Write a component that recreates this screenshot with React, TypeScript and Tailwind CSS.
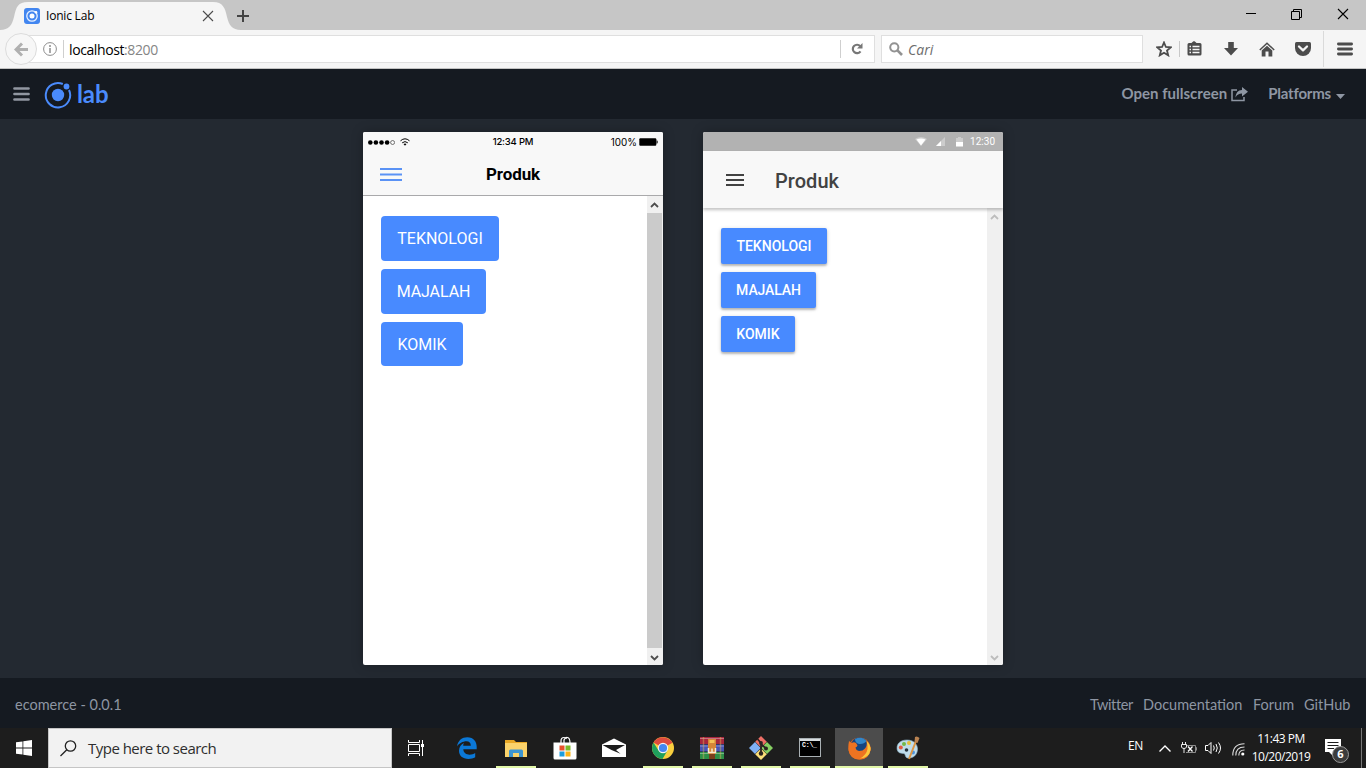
import React from "react";

type SvgProps = React.SVGProps<SVGSVGElement>;

const Svg = ({ children, ...p }: SvgProps) => (
  <svg fill="none" {...p} className={"block shrink-0 " + (p.className ?? "")}>
    {children}
  </svg>
);

/* ---------- Browser chrome ---------- */

function TabStrip() {
  return (
    <div className="relative flex h-[30px] shrink-0 bg-[#c6c6c6]">
      <Svg width="242" height="30" viewBox="0 0 242 30" className="absolute left-0 top-0">
        <path d="M0 30C9 30 12 25 14 17C16 7 18 2 28 2H213C223 2 225 8 227 17C229 25 232 30 241 30Z" fill="#f5f5f5" />
      </Svg>
      <div className="relative flex h-full w-full items-center">
        <Svg width="16" height="16" viewBox="0 0 16 16" className="ml-6 mt-0.5">
          <rect width="16" height="16" rx="3" fill="#4286f0" />
          <circle cx="8" cy="8" r="5.2" stroke="#e8f1ff" strokeWidth="1.3" />
          <circle cx="8" cy="8" r="2.5" fill="#fff" />
          <circle cx="12" cy="4.2" r="1.3" fill="#fff" />
        </Svg>
        <span className="ml-1.5 mt-0.5 w-[156px] text-[12px] leading-4 tracking-[-0.2px] text-black">Ionic Lab</span>
        <Svg width="12" height="12" viewBox="0 0 12 12" className="mt-0.5" stroke="#4b4b4b" strokeWidth="1.1">
          <path d="M1 1L11 11M11 1L1 11" />
        </Svg>
        <Svg width="12" height="12" viewBox="0 0 12 12" className="ml-[23px] mt-0.5" stroke="#444" strokeWidth="2">
          <path d="M6 0V12M0 6H12" />
        </Svg>
        <div className="ml-auto flex items-center gap-[35px] pr-[17px]">
          <Svg width="10" height="12" viewBox="0 0 10 12" stroke="#000" className="-mt-0.5">
            <path d="M0 5.5H10" />
          </Svg>
          <Svg width="11" height="11" viewBox="0 0 11 11" stroke="#000" className="-mt-0.5">
            <path d="M.5 2.5H8.500V10.500H.5ZM2.500 2.500V.5H10.500V8.500H8.500" />
          </Svg>
          <Svg width="12" height="12" viewBox="0 0 12 12" stroke="#000" strokeWidth="1.1" className="-mt-0.5">
            <path d="M1 1L11 11M11 1L1 11" />
          </Svg>
        </div>
      </div>
    </div>
  );
}

function Toolbar() {
  return (
    <div className="flex h-[39px] shrink-0 items-center border-b border-[#c2c2c2] bg-[#f5f5f5]">
      <div className="z-10 ml-[5px] flex size-8 items-center justify-center rounded-full border border-[#dcdcdc] bg-[#f7f7f7]">
        <Svg width="14" height="15" viewBox="0 0 14 15" stroke="#b0b0b0" strokeWidth="3">
          <path d="M8 1.500L2 7.500L8 13.500M2.500 7.500H14" />
        </Svg>
      </div>
      <div className="-ml-3 flex h-[28px] w-[850px] items-center border border-[#dfdfdf] bg-white">
        <Svg width="14" height="14" viewBox="0 0 14 14" className="ml-[17px]" stroke="#8d8d8d">
          <circle cx="7" cy="7" r="6.400" />
          <path d="M7 6V11M7 3V5" strokeWidth="1.500" />
        </Svg>
        <div className="ml-1.5 h-[18px] w-px bg-[#cfcfcf]" />
        <div className="ml-[5px] mt-px text-[14px] tracking-[-0.4px] text-black">
          localhost<span className="text-[#858585]">:8200</span>
        </div>
        <div className="ml-auto h-[18px] w-px bg-[#cfcfcf]" />
        <Svg width="12" height="12" viewBox="0 0 12 12" className="ml-[10px] mr-[11px]">
          <path d="M9.500 8.300A4.200 4.200 0 1 1 9.200 3.200" stroke="#777" strokeWidth="2.200" />
          <path d="M11.500 0V5.500H6Z" fill="#777" />
        </Svg>
      </div>
      <div className="ml-1.5 flex h-[28px] w-[262px] items-center border border-[#dfdfdf] bg-white">
        <Svg width="14" height="14" viewBox="0 0 14 14" className="ml-[7px]">
          <circle cx="5.300" cy="5.300" r="4.100" stroke="#929292" strokeWidth="2" />
          <path d="M8.400 8.400L13 13" stroke="#929292" strokeWidth="2.600" />
        </Svg>
        <span className="ml-[5px] mt-px text-[14px] italic text-[#6d6d6d]">Cari</span>
      </div>
      <Svg width="16" height="16" viewBox="0 0 16 16" className="ml-[13px]">
        <path d="M8 1.500L9.900 6L14.800 6.300L11 9.500L12.200 14.300L8 11.700L3.800 14.300L5 9.500L1.200 6.300L6.100 6Z" stroke="#4c4c4c" strokeWidth="1.800" />
      </Svg>
      <div className="ml-[7px] h-4 w-px bg-[#c8c8c8]" />
      <Svg width="15" height="15" viewBox="0 0 15 15" className="-mt-px ml-[7px]">
        <path d="M2 2H4.500L5.500 1L7 0L8.500 1L9.500 2H13Q14.500 2 14.500 3.500V13Q14.500 14.500 13 14.500H2Q.5 14.500 .5 13V3.500Q.5 2 2 2Z" fill="#4c4c4c" />
        <path d="M2.500 5.500H4M5.500 5.500H12.500M2.500 8.500H4M5.500 8.500H12.500M2.500 11.500H4M5.500 11.500H12.500" stroke="#f5f5f5" strokeWidth="1.400" />
      </Svg>
      <Svg width="14" height="14" viewBox="0 0 14 14" className="ml-[22px]">
        <path d="M4.200 0H9.800V6H14L7 13.500L0 6H4.200Z" fill="#4c4c4c" />
      </Svg>
      <Svg width="16" height="15" viewBox="0 0 16 15" className="ml-[21px]">
        <path d="M.8 8L8 1.300L15.200 8" stroke="#4c4c4c" strokeWidth="1.500" />
        <path d="M8 3.700L13.300 8.500V14.500H9.500V9.500H6.500V14.500H2.700V8.500Z" fill="#4c4c4c" />
      </Svg>
      <Svg width="16" height="14" viewBox="0 0 16 14" className="ml-5">
        <path d="M1.500 0H14.500Q16 0 16 1.500V6A8 8 0 0 1 0 6V1.500Q0 0 1.500 0Z" fill="#4c4c4c" />
        <path d="M4 4.500L8 8.300L12 4.500" stroke="#f5f5f5" strokeWidth="2.300" strokeLinecap="round" strokeLinejoin="round" />
      </Svg>
      <div className="ml-3 h-9 w-px bg-[#dadada]" />
      <Svg width="16" height="14" viewBox="0 0 16 14" className="ml-[13px]">
        <path d="M1.400 2H14.600M1.400 7H14.600M1.400 12H14.600" stroke="#4c4c4c" strokeWidth="2.800" strokeLinecap="round" />
      </Svg>
    </div>
  );
}

/* ---------- Ionic Lab ---------- */

function LabHeader() {
  return (
    <header className="flex h-[50px] shrink-0 items-center bg-[#151a21] font-['Lato',sans-serif] text-[#8e96a3]">
      <Svg width="17" height="14" viewBox="0 0 17 14" className="ml-[13px]">
        <path d="M1.500 1.500H15.500M1.500 7H15.500M1.500 12.500H15.500" stroke="#9197a1" strokeWidth="2.700" strokeLinecap="round" />
      </Svg>
      <Svg width="28" height="28" viewBox="0 0 28 28" className="ml-[14px] mt-px">
        <path d="M18.800 3A12.200 12.200 0 1 0 25 9" stroke="#4a8bfc" strokeWidth="2" />
        <circle cx="14" cy="14" r="6.200" fill="#4a8bfc" />
        <circle cx="22.500" cy="5.500" r="2.900" fill="#4a8bfc" />
      </Svg>
      <span className="ml-[5px] mb-px font-['Lato',sans-serif] text-[24px] font-bold leading-7 tracking-[-0.1px] text-[#4a8bfc]">lab</span>
      <span className="mb-px ml-auto text-[15px] font-bold">Open fullscreen</span>
      <Svg width="17" height="15" viewBox="0 0 17 15" className="ml-1">
        <path d="M6 3H1V13.500H13V10" stroke="#8e96a3" strokeWidth="1.500" />
        <path d="M11 0L17 4.800L11 9.500V6.500C8 6.500 6 7.500 4.500 10.500C4.800 6 7 3.300 11 3.100Z" fill="#8e96a3" />
      </Svg>
      <span className="mb-px ml-5 text-[15px] font-bold tracking-[-0.2px]">Platforms</span>
      <Svg width="9" height="5" viewBox="0 0 9 5" className="ml-[5px] mr-[21px] mt-1">
        <path d="M0 0H9L4.500 5Z" fill="#8e96a3" />
      </Svg>
    </header>
  );
}

function Scrollbar({ active }: { active: boolean }) {
  const c = active ? "#4d4d4d" : "#bdbdbd";
  return (
    <div className="flex w-4 shrink-0 flex-col items-center justify-between bg-[#f0f0f0] pr-px">
      <div className="flex h-[17px] items-center">
        <Svg width="9" height="6" viewBox="0 0 9 6" stroke={c} strokeWidth="1.800">
          <path d="M1 5L4.500 1.500L8 5" />
        </Svg>
      </div>
      {active && <div className="w-full flex-1 bg-[#cbcbcb]" />}
      <div className="flex h-[17px] items-center pt-0.5">
        <Svg width="9" height="6" viewBox="0 0 9 6" stroke={c} strokeWidth="1.800">
          <path d="M1 1L4.500 4.500L8 1" />
        </Svg>
      </div>
    </div>
  );
}

const categories = [
  { label: "TEKNOLOGI", ios: "w-[118px]", md: "w-[106px]" },
  { label: "MAJALAH", ios: "w-[105px] tracking-[-0.1px]", md: "w-[95px] tracking-[-0.1px]" },
  { label: "KOMIK", ios: "w-[82px]", md: "w-[74px]" },
];

function IosPhone() {
  return (
    <section className="flex h-[533px] w-[300px] flex-col overflow-hidden rounded-[2px] bg-white font-['Roboto',sans-serif] shadow-[0_0_12px_rgba(0,0,0,0.25)]">
      <div className="flex h-[64px] shrink-0 flex-col border-b border-[#a9a9ab] bg-[#f8f8f8]">
        <div className="grid h-5 grid-cols-3 items-center px-[5px] font-['Inter',sans-serif] text-[9.500px] text-black">
          <div className="flex items-center gap-[5px]">
            <Svg width="27" height="5" viewBox="0 0 27 5" fill="#000">
              <circle cx="2.300" cy="2.500" r="2.300" />
              <circle cx="7.900" cy="2.500" r="2.300" />
              <circle cx="13.500" cy="2.500" r="2.300" />
              <circle cx="19.100" cy="2.500" r="2.300" />
              <circle cx="24.600" cy="2.500" r="2" fill="none" stroke="#222" strokeWidth=".6" />
            </Svg>
            <Svg width="10" height="8" viewBox="0 0 10 8" stroke="#000">
              <path d="M.5 2.800Q5-1.200 9.500 2.800M2.200 4.800Q5 2.400 7.800 4.800" strokeWidth="1" />
              <path d="M3.500 6L5 7.700L6.500 6Q5 5 3.500 6Z" fill="#000" stroke="none" />
            </Svg>
          </div>
          <span className="text-center font-medium tracking-[-0.2px]">12:34 PM</span>
          <div className="flex items-center justify-end gap-[2px]">
            <span className="pt-px text-[9.900px]">100%</span>
            <Svg width="19" height="8" viewBox="0 0 19 8">
              <rect x=".3" y=".3" width="17" height="7.400" rx="1" fill="#000" />
              <path d="M17.900 2.500Q19 4 17.900 5.500Z" fill="#000" stroke="#000" strokeWidth=".5" />
            </Svg>
          </div>
        </div>
        <div className="grid flex-1 grid-cols-[1fr_auto_1fr] items-center pt-px">
          <Svg width="22" height="14" viewBox="0 0 22 14" className="ml-[17px]" stroke="#5a92f5" strokeWidth="2">
            <path d="M0 2H22M0 7.500H22M0 13H22" />
          </Svg>
          <span className="pt-0.5 text-[17px] font-bold tracking-[-0.1px] text-black">Produk</span>
        </div>
      </div>
      <div className="flex flex-1">
        <div className="flex flex-1 flex-col items-start gap-2 pl-[18px] pt-5 text-[16px] text-white">
          {categories.map((c) => (
            <button key={c.label} className={"h-[44.800px] whitespace-nowrap rounded bg-[#488aff] pt-0.5 " + c.ios}>
              {c.label}
            </button>
          ))}
        </div>
        <Scrollbar active />
      </div>
    </section>
  );
}

function AndroidPhone() {
  return (
    <section className="flex h-[533px] w-[300px] flex-col overflow-hidden rounded-[2px] bg-white font-['Roboto',sans-serif] shadow-[0_0_12px_rgba(0,0,0,0.25)]">
      <div className="flex h-[19px] shrink-0 items-center justify-end bg-[#b2b2b2] pr-2 text-[10px] text-white">
        <Svg width="12" height="9" viewBox="0 0 12 9">
          <path d="M0 2Q6-2 12 2L6 9Z" fill="#ccc" />
          <path d="M1.500 2.500Q6 .5 10.500 2.500L6 8.500Z" fill="#fff" />
        </Svg>
        <Svg width="9" height="9" viewBox="0 0 9 9" className="ml-[9px]">
          <path d="M9 0V9H0Z" fill="#ccc" />
          <path d="M5 4V9H0Z" fill="#fff" />
        </Svg>
        <Svg width="7" height="10" viewBox="0 0 7 10" className="ml-[11px]">
          <path d="M0 1H2V0H5V1H7V5H0Z" fill="#ccc" />
          <path d="M0 5H7V9.500H0Z" fill="#fff" />
        </Svg>
        <span className="ml-[7px] pt-px leading-[18px]">12:30</span>
      </div>
      <div className="z-10 flex h-[57px] shrink-0 items-center bg-[#f8f8f8] shadow-[0_2px_3px_rgba(0,0,0,0.24)]">
        <Svg width="18" height="12" viewBox="0 0 18 12" className="ml-[23px]" stroke="#424242" strokeWidth="2">
          <path d="M0 1H18M0 6H18M0 11H18" />
        </Svg>
        <span className="ml-[31px] mt-0.5 text-[20px] font-medium tracking-[0.05px] text-[#424242]">Produk</span>
      </div>
      <div className="flex flex-1">
        <div className="flex flex-1 flex-col items-start gap-2 pl-[18px] pt-5 text-[14px] font-medium text-white">
          {categories.map((c) => (
            <button key={c.label} className={"h-9 whitespace-nowrap rounded-[2px] bg-[#488aff] shadow-[0_2px_2px_rgba(0,0,0,0.2),0_1px_4px_rgba(0,0,0,0.16)] " + c.md}>
              {c.label}
            </button>
          ))}
        </div>
        <Scrollbar active={false} />
      </div>
    </section>
  );
}

function LabFooter() {
  return (
    <footer className="flex h-[50px] shrink-0 items-center bg-[#151a21] px-[15px] pt-[3px] font-['Lato',sans-serif] text-[14.500px] text-[#8e96a3]">
      <span>ecomerce - 0.0.1</span>
      <nav className="ml-auto flex gap-[10px]">
        <span className="w-[43px] tracking-[-0.35px]">Twitter</span>
        <span className="w-[100px]">Documentation</span>
        <span className="w-[41px]">Forum</span>
        <span className="w-[47px]">GitHub</span>
      </nav>
    </footer>
  );
}

/* ---------- Windows taskbar ---------- */

const Edge = () => (
  <Svg width="22" height="22" viewBox="0 0 22 22">
    <path d="M1 9.500C2 3.500 6 .3 11.300 .3C17.700 .3 20.700 4.800 20.700 9.800V12.300H7.300C7.500 16 10.300 17.700 13.500 17.700C15.800 17.700 17.600 17.100 19.200 16.100V20.300C17.300 21.400 15 21.900 12.500 21.900C6.500 21.900 3 18.500 3 13.700C3 10 5 7.500 8 6C7.400 6.900 7.200 7.800 7.200 8.800H14.800C14.800 6 13.300 4.300 10.500 4.300C6.800 4.300 3 6.500 1 9.500Z" fill="#0b78d7" />
  </Svg>
);

const Explorer = () => (
  <Svg width="22" height="19" viewBox="0 0 22 19">
    <path d="M0 1H9L11 3H22V18H0Z" fill="#e9a825" />
    <path d="M0 4H22V18H0Z" fill="#fbd36b" />
    <path d="M4 18V12Q4 10.500 5.500 10.500H16.500Q18 10.500 18 12V18H14V14H8V18Z" fill="#3d95d1" />
  </Svg>
);

const Store = () => (
  <Svg width="24" height="24" viewBox="0 0 24 24">
    <path d="M8 7V5Q8 1.500 11 1.500Q13 1.500 13.500 3M11 7V4Q12 1 14.500 1.500Q17 2 17 7" stroke="#fff" strokeWidth="1.200" />
    <path d="M.5 6.500H23.500V22Q23.500 23.500 22 23.500H2Q.5 23.500 .5 22Z" fill="#fff" />
    <rect x="6.500" y="9.500" width="5" height="5" fill="#e8502a" />
    <rect x="12.500" y="9.500" width="5" height="5" fill="#7db928" />
    <rect x="6.500" y="15.500" width="5" height="5" fill="#1c9ddd" />
    <rect x="12.500" y="15.500" width="5" height="5" fill="#fbb417" />
  </Svg>
);

const Mail = () => (
  <Svg width="24" height="20" viewBox="0 0 24 20">
    <path d="M0 6.500L12 .5L24 6.500V19H0Z" fill="#fff" />
    <path d="M.5 7H23L14 12L18.500 15.800L9.500 12Z" fill="#1d1d1d" />
  </Svg>
);

const Chrome = () => (
  <Svg width="22" height="22" viewBox="0 0 22 22">
    <circle cx="11" cy="11" r="11" fill="#f9cf3e" />
    <path d="M11 11L1.500 5.500A11 11 0 0 1 20.500 5.700Z" fill="#dd4b3e" />
    <path d="M1.500 5.500A11 11 0 0 0 10.500 22L15.500 13.500L6.500 13.500Z" fill="#1fa05c" />
    <circle cx="11" cy="11" r="5.200" fill="#f4f4f4" />
    <circle cx="11" cy="11" r="4.100" fill="#4587f0" />
  </Svg>
);

const WinRar = () => (
  <Svg width="24" height="22" viewBox="0 0 24 22">
    <rect width="24" height="7" y="0" fill="#a6263c" />
    <rect width="24" height="7" y="7.500" fill="#4653b4" />
    <rect width="24" height="7" y="15" fill="#2c8f46" />
    <path d="M0 1.500H24M0 9H24M0 16.500H24" stroke="#fff" strokeOpacity=".35" />
    <path d="M3.500 0V22M20.500 0V22" stroke="#d9b65a" strokeOpacity=".45" strokeWidth="1.500" />
    <rect x="8" y="2" width="8" height="15" fill="#d48637" />
    <path d="M9.500 3H14.500V6H9.500Z" fill="#f4c257" />
    <path d="M8.500 11V15.500H15.500V11M12 11.500V15" stroke="#f3ead2" strokeWidth="1.500" />
    <rect x="9" y="17" width="6" height="5" fill="#7a3f1c" />
  </Svg>
);

const Git = () => (
  <Svg width="24" height="24" viewBox="0 0 24 24">
    <path d="M12 0L17.800 5.800L12 11.600L6.200 5.800Z" fill="#ee6f66" />
    <path d="M6 6L11.700 12L6 18L0 12Z" fill="#7fb0f5" />
    <path d="M18 6L24 12L18 18L12.300 12Z" fill="#86cf62" />
    <path d="M12 12.400L17.800 18.200L12 24L6.200 18.200Z" fill="#fbdf79" />
    <path d="M8.500 3L12 7V18M12 8L17 12.500" stroke="#2b2220" strokeWidth="1.800" />
    <circle cx="12" cy="7" r="1.900" fill="#2b2220" />
    <circle cx="12" cy="17.500" r="2.200" fill="#2b2220" />
    <circle cx="17" cy="12.500" r="2" fill="#2b2220" />
  </Svg>
);

const Cmd = () => (
  <div className="mb-0.5 flex h-[19px] w-[22px] flex-col border border-[#a9b0b3] bg-black">
    <div className="h-[2px] bg-[#d9dedf]" />
    <span className="pl-0.5 pt-px font-['Liberation_Mono',monospace] text-[6.500px] font-bold leading-[7px] tracking-[-0.2px] text-white">C:\_</span>
  </div>
);

const Firefox = () => (
  <Svg width="23" height="23" viewBox="0 0 23 23">
    <circle cx="11.500" cy="11.500" r="11" fill="#e9661c" />
    <circle cx="11.500" cy="9" r="8.700" fill="#17457f" />
    <path d="M7 2Q14-1.500 18.500 4Q16 7.500 11 7Q7 6 7 2Z" fill="#3387c8" />
    <path d="M1 4L3.500 6Q6 4.500 8 6L9.500 8.500Q9 10 7.500 10.500Q8 13.500 11 14Q15 14 17 11.500Q19.500 8.500 18.500 4Q23 8 22.500 13Q21 22.500 11.500 22.500Q2 22.500 .5 13Q0 8 1 4Z" fill="#ed7321" />
    <path d="M18.500 4Q23 8 22.500 13Q21 21 12 21.500Q18.500 18 19.500 12Q20 8 18.500 4Z" fill="#fac83c" />
  </Svg>
);

const Paint = () => (
  <Svg width="24" height="24" viewBox="0 0 24 24">
    <path d="M1 12C1 7 5 4 11 4C18 4 21.500 8.500 21.500 13C21.500 19 17 22.500 11.500 22C9 21.500 10 19 8 17.500C5 17.500 1 17 1 12Z" fill="#bfdcea" stroke="#8db4c8" strokeWidth=".6" />
    <circle cx="4.800" cy="11.500" r="2" fill="#e05a42" />
    <circle cx="8" cy="8" r="2" fill="#73b84a" />
    <circle cx="13" cy="7" r="2" fill="#e8bd37" />
    <circle cx="10.500" cy="14" r="1.800" fill="#26333d" />
    <circle cx="17" cy="16.500" r="2" fill="#4d94dd" />
    <path d="M20 5L13 23" stroke="#dc9645" strokeWidth="2" />
    <path d="M18.500 6L19 1Q21-.5 23.500 2L21.500 7Z" fill="#b98251" />
  </Svg>
);

function TaskItem({ children, open, focused }: { children: React.ReactNode; open?: boolean; focused?: boolean }) {
  return (
    <div className={"flex h-10 w-12 shrink-0 flex-col items-center " + (focused ? "bg-[#4c4c4c]" : "")}>
      <div className="flex h-[38px] items-center pt-0.5">{children}</div>
      {open && <div className={"h-0.5 bg-[#e2f7a8] " + (focused ? "w-12" : "w-10")} />}
    </div>
  );
}

function Taskbar() {
  return (
    <div className="flex h-10 shrink-0 bg-[#1d1d1d] text-white">
      <div className="flex w-12 shrink-0 items-center justify-center">
        <Svg width="16" height="16" viewBox="0 0 16 16" fill="#fff">
          <path d="M0 2.300L6.500 1.400V7.600H0ZM7.300 1.200L16 0V7.600H7.300ZM0 8.400H6.500V14.600L0 13.700ZM7.300 8.400H16V16L7.300 14.800Z" />
        </Svg>
      </div>
      <div className="flex w-[344px] shrink-0 items-center border border-[#c5c5c5] bg-[#f2f2f2]">
        <Svg width="17" height="17" viewBox="0 0 17 17" className="ml-[11px]" stroke="#222" strokeWidth="1.300">
          <circle cx="10.500" cy="6" r="5.200" />
          <path d="M6.800 9.700L.5 16" />
        </Svg>
        <span className="ml-[11px] text-[15px] tracking-[-0.52px] text-[#2e2e2e]">Type here to search</span>
      </div>
      <div className="flex w-12 shrink-0 items-center justify-center">
        <Svg width="17" height="16" viewBox="0 0 17 16" stroke="#fff" strokeWidth="1" className="-mt-px">
          <path d="M.5 0V2.500H11.500V0M.5 16V13.500H11.500V16M.5 4.500H11.500V11.500H.5ZM14.500 0V16" />
          <rect x="13" y="4" width="3" height="3" fill="#fff" stroke="none" />
        </Svg>
      </div>
      <div className="ml-[3px] flex gap-px">
        <TaskItem><Edge /></TaskItem>
        <TaskItem open><Explorer /></TaskItem>
        <TaskItem><Store /></TaskItem>
        <TaskItem><Mail /></TaskItem>
        <TaskItem open><Chrome /></TaskItem>
        <TaskItem open><WinRar /></TaskItem>
        <TaskItem open><Git /></TaskItem>
        <TaskItem open><Cmd /></TaskItem>
        <TaskItem open focused><Firefox /></TaskItem>
        <TaskItem open><Paint /></TaskItem>
      </div>
      <div className="ml-auto flex items-center">
        <span className="mr-4 -mt-1 text-[12px] tracking-[-0.3px]">EN</span>
        <Svg width="12" height="7" viewBox="0 0 12 7" stroke="#fff" strokeWidth="1.400">
          <path d="M.5 6.500L6 1L11.500 6.500" />
        </Svg>
        <Svg width="16" height="12" viewBox="0 0 16 12" className="-mt-px ml-2.5" stroke="#fff">
          <path d="M1.500 0V2.500M4.500 0V2.500M.5 2.500H5.500V5Q5 6.500 3 6.500Q1 6.500 .5 5ZM3 6.500V11" strokeWidth=".9" />
          <path d="M6 3.500H14.500V10.500H5M14.500 5.500H15.500V8.500" stroke="#999" strokeWidth=".9" />
          <path d="M7 4.500L11.500 9.500M11.500 4.500L7 9.500" strokeWidth="1.300" />
        </Svg>
        <Svg width="17" height="14" viewBox="0 0 17 14" className="ml-2" stroke="#fff">
          <path d="M.5 4.500H3L6 1.500V12.500L3 9.500H.5ZM8.500 4.500Q10 7 8.500 9.500M11 3Q13.500 7 11 11M13.500 1.500Q17.500 7 13.500 12.500" />
        </Svg>
        <Svg width="13" height="13" viewBox="0 0 13 13" className="ml-[10px] mt-0.5" stroke="#ddd">
          <path d="M.8 12.500Q.8 .8 12.500 .8M3.800 12.500Q3.800 4 12.500 4M6.800 12.500Q6.800 7 12.500 7" strokeWidth="1.100" />
          <circle cx="10.800" cy="11" r="1.600" fill="#fff" stroke="none" />
        </Svg>
        <div className="ml-[7px] flex w-[58px] flex-col items-center whitespace-nowrap text-[12px] leading-[18px] tracking-[-0.5px]">
          <span>11:43 PM</span>
          <span>10/20/2019</span>
        </div>
        <div className="relative ml-[15px] h-[27px] w-[26px]">
          <Svg width="16" height="17" viewBox="0 0 16 17" className="mt-1">
            <path d="M0 0H16V13H8V17L4 13H0Z" fill="#fff" />
            <path d="M2.500 3.500H13.500M2.500 6.500H13.500M2.500 9.500H9" stroke="#1d1d1d" />
          </Svg>
          <div className="absolute left-[7px] top-[11px] flex size-[17px] items-center justify-center rounded-full border border-[#999] bg-[#3c3c3c] text-[11px] font-bold">6</div>
        </div>
        <div className="ml-2.5 mr-1 h-10 w-px bg-[#777]" />
      </div>
    </div>
  );
}

export default function App() {
  return (
    <div className="flex h-[768px] w-[1366px] flex-col overflow-hidden font-['Open_Sans',sans-serif]">
      <TabStrip />
      <Toolbar />
      <LabHeader />
      <main className="flex flex-1 justify-center gap-10 bg-[#232931] pt-[13px]">
        <IosPhone />
        <AndroidPhone />
      </main>
      <LabFooter />
      <Taskbar />
    </div>
  );
}
